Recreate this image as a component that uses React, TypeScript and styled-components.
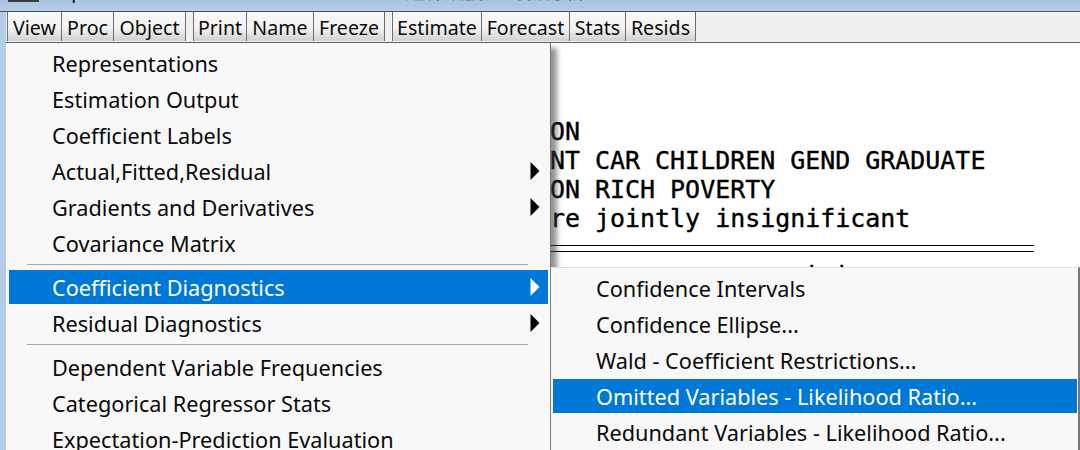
import styled, { createGlobalStyle } from 'styled-components';

const GlobalStyle = createGlobalStyle`
html, body {
  margin: 0;
  padding: 0;
  height: 100%;
  overflow: hidden;
  background: #b5cde6;
}
#root {
  height: 100%;
}
`;

const toolGroups = [
	[
		{ label: 'View', width: 55 },
		{ label: 'Proc', width: 52 },
		{ label: 'Object', width: 72 },
	],
	[
		{ label: 'Print', width: 54 },
		{ label: 'Name', width: 67 },
		{ label: 'Freeze', width: 71 },
	],
	[
		{ label: 'Estimate', width: 90 },
		{ label: 'Forecast', width: 88 },
		{ label: 'Stats', width: 56 },
		{ label: 'Resids', width: 70 },
	],
];

const reportLines = ['ON', 'NT CAR CHILDREN GEND GRADUATE', 'ON RICH POVERTY', 're jointly insignificant'];

function MenuEntry({ label, hasArrow, active }: { label: string; hasArrow?: boolean; active?: boolean }) {
	return (
		<Item $active={active}>
			<span>{label}</span>
			{hasArrow && (
				<Arrow width="10" height="18" viewBox="0 0 10 18">
					<path d="M0.5 0 L9.5 9 L0.5 18 Z" fill={active ? '#fff' : '#000'} />
				</Arrow>
			)}
		</Item>
	);
}

export default function App() {
	return (
		<Page>
			<GlobalStyle />
			<TitleBar>
				<TitleIcon />
				<TitleText>Equation: UNTITLED</TitleText>
				<TitleWorkfile>Workfile: 退休規劃與財務分析::Untitled\</TitleWorkfile>
			</TitleBar>
			<Body>
				<Toolbar>
					{toolGroups.map((group) => (
						<ToolGroup key={group[0].label}>
							{group.map((tool) => (
								<ToolButton key={tool.label} $width={tool.width}>
									{tool.label}
								</ToolButton>
							))}
						</ToolGroup>
					))}
				</Toolbar>
				<Report>
					{reportLines.map((line) => (
						<ReportLine key={line}>{line}</ReportLine>
					))}
					<DoubleRule />
					<HiddenLine>{'i i'}</HiddenLine>
				</Report>
			</Body>

			<Menu>
				<MenuEntry label="Representations" />
				<MenuEntry label="Estimation Output" />
				<MenuEntry label="Coefficient Labels" />
				<MenuEntry label="Actual,Fitted,Residual" hasArrow />
				<MenuEntry label="Gradients and Derivatives" hasArrow />
				<MenuEntry label="Covariance Matrix" />
				<Separator />
				<MenuEntry label="Coefficient Diagnostics" hasArrow active />
				<MenuEntry label="Residual Diagnostics" hasArrow />
				<Separator />
				<MenuEntry label="Dependent Variable Frequencies" />
				<MenuEntry label="Categorical Regressor Stats" />
				<MenuEntry label="Expectation-Prediction Evaluation" />
			</Menu>

			<SubMenu>
				<MenuEntry label="Confidence Intervals" />
				<MenuEntry label="Confidence Ellipse..." />
				<MenuEntry label="Wald - Coefficient Restrictions..." />
				<MenuEntry label="Omitted Variables - Likelihood Ratio..." active />
				<MenuEntry label="Redundant Variables - Likelihood Ratio..." />
			</SubMenu>
		</Page>
	);
}

const Page = styled.div`
position: relative;
width: 1080px;
height: 450px;
overflow: hidden;
display: flex;
flex-direction: column;
background: #b5cde6;
font-family: "Noto Sans", "Noto Sans CJK TC", "Open Sans", sans-serif;
`;

const TitleBar = styled.div`
height: 11px;
flex: none;
display: flex;
align-items: flex-end;
overflow: hidden;
background: linear-gradient(#a6c3e2, #b6cfe8);
border-bottom: 1px solid #47505c;
`;

const TitleIcon = styled.div`
width: 31px;
height: 2px;
margin: 0 14px 9px 8px;
align-self: flex-start;
background: #3a3a3a;
`;

const TitleText = styled.div`
position: relative;
top: -8px;
width: 264px;
font-size: 20px;
line-height: 24px;
white-space: nowrap;
color: #111;
`;

const TitleWorkfile = styled(TitleText)`
top: -7px;
width: auto;
color: #555;
`;

const Body = styled.div`
flex: 1;
margin-left: 6px;
display: flex;
flex-direction: column;
background: #fff;
`;

const Toolbar = styled.div`
height: 30px;
flex: none;
display: flex;
gap: 7px;
padding-left: 1px;
background: #f0f0f0;
border-bottom: 1px solid #5f6368;
`;

const ToolGroup = styled.div`
display: flex;
`;

const ToolButton = styled.div<{ $width: number }>`
width: ${(p) => p.$width}px;
height: 29px;
box-sizing: border-box;
padding-top: 1px;
display: flex;
align-items: center;
justify-content: center;
font-size: 19.6px;
color: #0b0b0b;
background: linear-gradient(#f9f9f9 0%, #f3f3f3 55%, #d0d0d0 100%);
border-right: 1px solid #6d6d6d;
&:first-child {
  border-left: 1px solid #6d6d6d;
}
`;

const Report = styled.div`
flex: 1;
padding: 74px 0 0 544px;
font-family: "DejaVu Sans Mono", monospace;
font-size: 24.95px;
-webkit-text-stroke: 0.4px #000;
color: #000;
`;

const ReportLine = styled.div`
height: 29px;
line-height: 29px;
white-space: pre;
`;

const DoubleRule = styled.div`
width: 484px;
height: 5px;
margin-top: 12px;
border-top: 1px solid #000;
border-bottom: 1px solid #000;
`;

const HiddenLine = styled(ReportLine)`
margin: 9px 0 0 254px;
`;

const Menu = styled.div`
position: absolute;
left: 6px;
top: 43px;
width: 545px;
height: 420px;
box-sizing: border-box;
padding: 3px 2px 0 3px;
background: #f8f8f8;
border-right: 1px solid #777;
box-shadow: 7px 4px 5px -1px rgba(60, 60, 60, 0.55);
`;

const SubMenu = styled.div`
position: absolute;
left: 550px;
top: 267px;
width: 530px;
height: 200px;
box-sizing: border-box;
padding: 3px 1px 0 2px;
background: #f8f8f8;
border-top: 1px solid #e0e0e0;
border-left: 1px solid #777;
border-right: 2px solid #777;
`;

const Item = styled.div<{ $active?: boolean }>`
height: 34px;
margin-bottom: 2px;
display: flex;
align-items: center;
justify-content: space-between;
padding: 0 8px 0 43px;
box-sizing: border-box;
font-size: 21.7px;
white-space: nowrap;
color: ${(p) => (p.$active ? '#fff' : '#0a0a0a')};
background: ${(p) => (p.$active ? '#0078d7' : 'transparent')};
`;

const Arrow = styled.svg`
flex: none;
margin-top: -1px;
`;

const Separator = styled.div`
height: 1px;
margin: 4px 20px 5px 18px;
background: #a8a8a8;
`;
